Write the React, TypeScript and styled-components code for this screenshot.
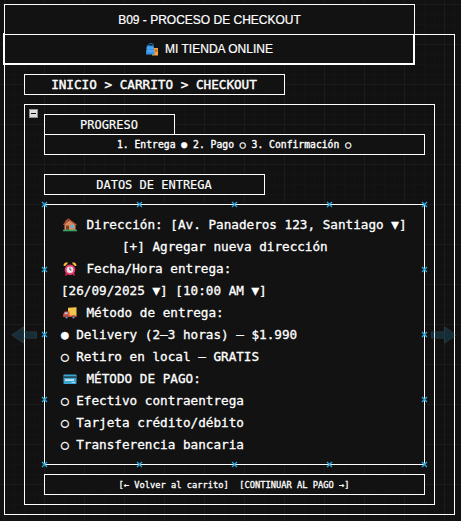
import React from 'react';
import styled, { createGlobalStyle } from 'styled-components';

const Global = createGlobalStyle`
  html, body { margin: 0; background: #111; }
  body { overflow: hidden; }
  * { box-sizing: border-box; }
`;

const mono = '"DejaVu Sans Mono", "Liberation Mono", monospace';

const Canvas = styled.main`
  width: 461px;
  height: 521px;
  padding: 4px 0 0 4px;
  overflow: hidden;
  color: #fff;
  background-color: #111;
  background-image:
    linear-gradient(#1b1b1b 1px, transparent 1px),
    linear-gradient(90deg, #1b1b1b 1px, transparent 1px),
    linear-gradient(#141414 1px, transparent 1px),
    linear-gradient(90deg, #141414 1px, transparent 1px);
  background-size: 40px 40px, 40px 40px, 10px 10px, 10px 10px;
  background-position: 4px 4px;
`;

const Box = styled.div<{ $w: number; $h?: number; $mt?: number; $ml?: number }>`
  display: flex;
  align-items: center;
  justify-content: center;
  width: ${p => p.$w}px;
  height: ${p => p.$h ?? 21}px;
  margin-top: ${p => p.$mt ?? 0}px;
  margin-left: ${p => p.$ml ?? 0}px;
  border: 1px solid #fff;
  background: #121212;
  white-space: pre;
`;

const TitleBox = styled(Box)`
  position: relative;
  z-index: 1;
  font: 12px "Liberation Sans", Arial, sans-serif;
  -webkit-text-stroke: 0.2px #fff;
`;

const StoreBox = styled(Box)`
  border-width: 2px;
  gap: 6px;
  padding-left: 1px;
  font: 12px "Liberation Sans", Arial, sans-serif;
  -webkit-text-stroke: 0.2px #fff;
`;

const Frame = styled.section<{ $w: number; $h: number; $mt: number; $ml?: number }>`
  position: relative;
  display: flex;
  flex-direction: column;
  width: ${p => p.$w}px;
  height: ${p => p.$h}px;
  margin-top: ${p => p.$mt}px;
  margin-left: ${p => p.$ml ?? 0}px;
  border: 1px solid #fff;
`;

const InnerFrame = styled(Frame)`
  padding: 9px 0 0 19px;
`;

const Label = styled.span<{ $size: number; $stroke?: number }>`
  font-family: ${mono};
  font-size: ${p => p.$size}px;
  -webkit-text-stroke: ${p => p.$stroke ?? 0}px #fff;
  margin-right: 1px;
  white-space: pre;
`;

const Form = styled.div`
  position: relative;
  width: 381px;
  height: 261px;
  margin-top: 9px;
  padding: 8px 0 0 16px;
  border: 1px solid #fff;
  background: #121212;
`;

const Line = styled.div<{ $indent?: number }>`
  display: flex;
  align-items: center;
  height: 22px;
  padding-left: ${p => p.$indent ?? 0}px;
`;

const IconSlot = styled.span`
  display: flex;
  width: 25.5px;
  padding: 1px 0 0 2px;
`;

const Overlay = styled.svg<{ $x: number; $y: number }>`
  position: absolute;
  left: ${p => p.$x}px;
  top: ${p => p.$y}px;
  overflow: visible;
  pointer-events: none;
`;

const Bags = () => (
  <svg width="13" height="13" viewBox="0 0 13 13">
    <path d="M3 3V1.5Q3 .5 4 .5H6Q7 .5 7 1.5V3" fill="none" stroke="#1d6c9c" />
    <path d="M6.5 5H12V12.5H6Z" fill="#f5a340" />
    <path d="M9 6.5V8Q10 9 11 8V6.5" fill="none" stroke="#ae601c" />
    <path d="M.8 2.5H7.6L8.6 11.5H0Z" fill="#3595e8" />
    <path d="M.8 5H7.8M.6 8H8" stroke="#66b7f3" />
  </svg>
);

const House = () => (
  <svg width="14" height="14" viewBox="0 0 14 14">
    <path d="M2.5 2H5V6H2.5Z" fill="#8f5040" />
    <path d="M1.5 6.5L7 2L12.5 6.5V12H1.5Z" fill="#d98b5f" />
    <path d="M.6 7L5.2 1.2L13.4 7" fill="none" stroke="#b3533b" strokeWidth="1.5" />
    <path d="M3 7.5H6V12H3Z" fill="#744334" />
    <path d="M8 7H11V9.8H8Z" fill="#4db6e8" />
    <path d="M0 11.7H14V13.3H0Z" fill="#35a566" />
  </svg>
);

const Clock = () => (
  <svg width="14" height="14" viewBox="0 0 14 14">
    <path d="M1.5 4Q1.5 1.3 4.5 1.3M9.5 1.3Q12.5 1.3 12.5 4" fill="none" stroke="#f6b83b" strokeWidth="2" />
    <path d="M3.5 11.5L2.5 13.5M10.5 11.5L11.5 13.5" stroke="#d83158" strokeWidth="1.5" />
    <circle cx="7" cy="7.8" r="4.3" fill="#eee7f2" stroke="#e83c6b" strokeWidth="2" />
    <path d="M7 5.5V8H8.5" fill="none" stroke="#65405d" />
  </svg>
);

const Truck = () => (
  <svg width="14" height="14" viewBox="0 0 14 14">
    <path d="M5 1.8L13.5 1.3V10H5Z" fill="#f2c54c" />
    <path d="M1.7 5.5H6.5V11H.3V8Z" fill="#e8533f" />
    <path d="M2.2 6.3H4.5V8H1.5Z" fill="#8bd1ef" />
    <path d="M.3 9.5H13.5V11H.3Z" fill="#d9473c" />
    <circle cx="3.5" cy="11" r="1.7" fill="#555061" />
    <circle cx="10.5" cy="11" r="1.7" fill="#555061" />
    <circle cx="3.5" cy="11" r=".6" fill="#ccc" />
    <circle cx="10.5" cy="11" r=".6" fill="#ccc" />
  </svg>
);

const Card = () => (
  <svg width="14" height="14" viewBox="0 0 14 14">
    <rect x=".5" y="2.5" width="13" height="9.5" rx=".8" fill="#3ba5d4" />
    <path d="M.5 4.2H13.5V6H.5Z" fill="#254c60" />
    <path d="M2 7.3H11V8.8H2Z" fill="#e5edf2" />
    <path d="M8.5 10.5H12" stroke="#a7dcf1" />
  </svg>
);

const Collapse = () => (
  <Overlay $x={4} $y={4} width="9" height="9" viewBox="0 0 9 9">
    <rect x=".5" y=".5" width="8" height="8" fill="#dedede" stroke="#8c929a" />
    <path d="M2 4.5H7" stroke="#111" />
  </Overlay>
);

const columns = [0, 95, 190, 285, 380];
const rows = [0, 65, 130, 195, 260];
const handlePoints = rows.flatMap(y =>
  columns.filter(x => y === 0 || y === 260 || x === 0 || x === 380).map(x => [x, y]),
);

const Handles = () => (
  <Overlay $x={-1} $y={-1} width="381" height="261">
    {handlePoints.map(([x, y]) => (
      <path
        key={`${x}-${y}`}
        d={`M${x - 2} ${y - 2}l5 5m0-5l-5 5`}
        stroke="#29a9e0"
        strokeWidth="1.3"
      />
    ))}
  </Overlay>
);

const Arrow = ({ x, flip }: { x: number; flip?: boolean }) => (
  <Overlay $x={x} $y={291} width="26" height="18" viewBox="0 0 26 18">
    <path
      transform={flip ? 'translate(26 0) scale(-1 1)' : undefined}
      d="M.5 5.8H13.5V.8L25.2 9L13.5 17.2V12.2H.5Z"
      fill="#29b6f2"
      fillOpacity=".17"
      stroke="#4a5557"
      strokeOpacity=".4"
    />
  </Overlay>
);

type Entry = { text: string; icon?: React.ReactNode; indent?: number };

const entries: Entry[] = [
  { icon: <House />, text: 'Dirección: [Av. Panaderos 123, Santiago ▼]' },
  { indent: 61, text: '[+] Agregar nueva dirección' },
  { icon: <Clock />, text: 'Fecha/Hora entrega:' },
  { text: '[26/09/2025 ▼] [10:00 AM ▼]' },
  { icon: <Truck />, text: 'Método de entrega:' },
  { text: '● Delivery (2–3 horas) – $1.990' },
  { text: '○ Retiro en local – GRATIS' },
  { icon: <Card />, text: 'MÉTODO DE PAGO:' },
  { text: '○ Efectivo contraentrega' },
  { text: '○ Tarjeta crédito/débito' },
  { text: '○ Transferencia bancaria' },
];

export default function App() {
  return (
    <>
      <Global />
      <Canvas>
        <TitleBox $w={411} $h={31}>B09 - PROCESO DE CHECKOUT</TitleBox>
        <Frame $w={451} $h={481} $mt={-1}>
          <StoreBox $w={412} $h={32} $mt={-2} $ml={-2}>
            <Bags />
            <span>MI TIENDA ONLINE</span>
          </StoreBox>
          <Box $w={261} $mt={9} $ml={19}>
            <Label $size={12.66} $stroke={0.4}>{'INICIO > CARRITO > CHECKOUT'}</Label>
          </Box>
          <InnerFrame $w={411} $h={401} $mt={9} $ml={19}>
            <Collapse />
            <Box $w={131}>
              <Label $size={12} $stroke={0.15}>PROGRESO</Label>
            </Box>
            <Box $w={381} $mt={-1}>
              <Label $size={9.73} $stroke={0.35}>1. Entrega ● 2. Pago ○ 3. Confirmación ○</Label>
            </Box>
            <Box $w={221} $mt={19}>
              <Label $size={12} $stroke={0.15}>DATOS DE ENTREGA</Label>
            </Box>
            <Form>
              {entries.map(entry => (
                <Line key={entry.text} $indent={entry.indent}>
                  {entry.icon && <IconSlot>{entry.icon}</IconSlot>}
                  <Label $size={12.66} $stroke={0.3}>{entry.text}</Label>
                </Line>
              ))}
              <Handles />
            </Form>
            <Box $w={381} $mt={9}>
              <Label $size={8.73} $stroke={0.3}>{'[← Volver al carrito]  [CONTINUAR AL PAGO →]'}</Label>
            </Box>
          </InnerFrame>
          <Arrow x={6} flip />
          <Arrow x={426} />
        </Frame>
      </Canvas>
    </>
  );
}
